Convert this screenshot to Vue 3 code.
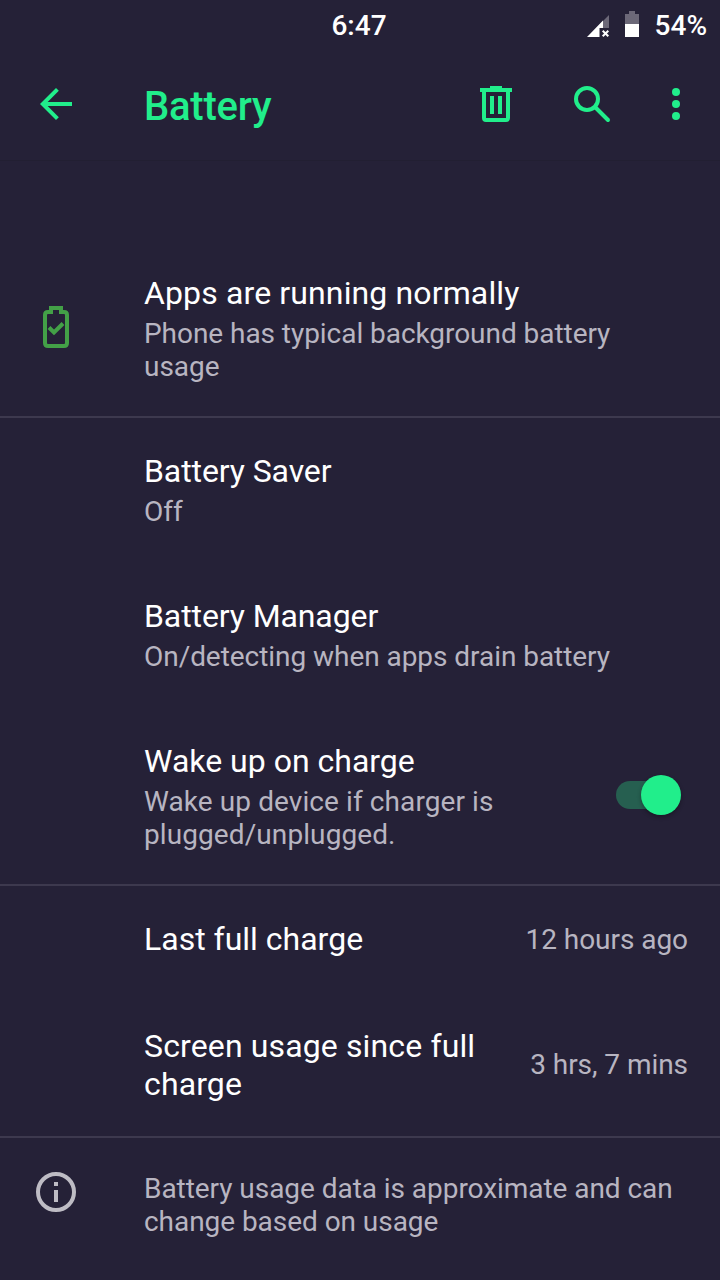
<script setup>
import { ref } from 'vue'

const wakeUp = ref(true)
</script>

<template>
  <div class="screen">
    <div class="status-bar">
      <span class="clock">6:47</span>
      <div class="status-icons">
        <svg class="signal" width="24" height="24" viewBox="0 0 24 24">
          <path d="M22 0V13H13V9Z" fill="#6c6878" />
          <path d="M0 22L16 5.500V13H12.500V22Z" fill="#fff" />
          <path d="M15.700 15.700L21.300 21.300M21.300 15.700L15.700 21.300" stroke="#fff" stroke-width="2" />
        </svg>
        <svg class="battery" width="14" height="26" viewBox="0 0 14 26">
          <path d="M0 3H4V0H10V3H14V13H0Z" fill="#6c6878" />
          <path d="M0 13H14V26H0Z" fill="#fff" />
        </svg>
        <span>54%</span>
      </div>
    </div>

    <header class="toolbar">
      <svg class="back" width="48" height="48" viewBox="0 0 24 24">
        <path d="M20 11H7.830l5.590-5.590L12 4l-8 8 8 8 1.410-1.410L7.830 13H20v-2z" fill="currentColor" />
      </svg>
      <h1>Battery</h1>
      <svg class="action" width="48" height="48" viewBox="0 0 48 48">
        <path d="M8 8H18V6H30V8H40V12H38V38A4 4 0 0 1 34 42H14A4 4 0 0 1 10 38V12H8ZM14 12V38H34V12ZM18 16H22V34H18ZM26 16H30V34H26Z" fill="currentColor" fill-rule="evenodd" />
      </svg>
      <svg class="action" width="48" height="48" viewBox="0 0 48 48" fill="none" stroke="currentColor" stroke-width="4">
        <circle cx="19" cy="19" r="11" />
        <path d="M28 28L40 40" stroke-linecap="round" />
      </svg>
      <svg class="more" width="48" height="48" viewBox="0 0 48 48" fill="currentColor">
        <circle cx="24" cy="12" r="4" />
        <circle cx="24" cy="24" r="4" />
        <circle cx="24" cy="36" r="4" />
      </svg>
    </header>

    <main class="list">
      <div class="row divided">
        <div class="icon">
          <svg width="48" height="48" viewBox="0 0 48 48" fill="none" stroke="#43a047" stroke-width="4">
            <path d="M19 9H19V5H29V9H32Q35 9 35 12V40Q35 43 32 43H16Q13 43 13 40V12Q13 9 16 9H21" />
            <path d="M17 24.500L22 29.500L31 20.500" />
          </svg>
        </div>
        <div class="text">
          <div class="title loose">Apps are running normally</div>
          <div class="summary">Phone has typical background battery usage</div>
        </div>
      </div>

      <div class="row">
        <div class="icon" />
        <div class="text">
          <div class="title tight">Battery Saver</div>
          <div class="summary">Off</div>
        </div>
      </div>

      <div class="row">
        <div class="icon" />
        <div class="text">
          <div class="title tight">Battery Manager</div>
          <div class="summary">On/detecting when apps drain battery</div>
        </div>
      </div>

      <div class="row divided">
        <div class="icon" />
        <div class="text">
          <div class="title">Wake up on charge</div>
          <div class="summary loose">Wake up device if charger is plugged/unplugged.</div>
        </div>
        <button class="switch" :class="{ on: wakeUp }" aria-label="Wake up on charge" @click="wakeUp = !wakeUp">
          <span class="thumb" />
        </button>
      </div>

      <div class="row">
        <div class="icon" />
        <div class="text">
          <div class="title">Last full charge</div>
        </div>
        <div class="value">12 hours ago</div>
      </div>

      <div class="row divided">
        <div class="icon" />
        <div class="text">
          <div class="title loose">Screen usage since full charge</div>
        </div>
        <div class="value">3 hrs, 7 mins</div>
      </div>

      <div class="row footer">
        <div class="icon">
          <svg width="48" height="48" viewBox="0 0 48 48">
            <circle cx="24" cy="24" r="18" fill="none" stroke="#bebcc4" stroke-width="4" />
            <path d="M22 14H26V18H22ZM22 22H26V34H22Z" fill="#bebcc4" />
          </svg>
        </div>
        <div class="text">
          <div class="summary">Battery usage data is approximate and can change based on usage</div>
        </div>
      </div>
    </main>
  </div>
</template>

<style>
body {
  background: #252137;
}
</style>

<style scoped>
.screen {
  width: 720px;
  height: 1280px;
  overflow: hidden;
  display: flex;
  flex-direction: column;
  background: #252137;
  color: #fff;
  font-family: Roboto, sans-serif;
}

svg {
  display: block;
  flex: none;
}

.status-bar {
  height: 48px;
  flex: none;
  display: grid;
  grid-template-columns: 1fr auto 1fr;
  align-items: center;
  box-sizing: border-box;
  padding: 2px 13px 0 11px;
  font-size: 28px;
  line-height: 33px;
  font-weight: 500;
}

.clock {
  grid-column: 2;
}

.status-icons {
  display: flex;
  align-items: center;
  justify-content: flex-end;
}

.signal {
  margin: 4px 14px 0 0;
}

.battery {
  margin: -2px 16px 0 0;
}

.toolbar {
  height: 112px;
  flex: none;
  box-sizing: border-box;
  display: flex;
  align-items: center;
  padding: 0 20px 0 32px;
  color: #21ee8b;
}

.back {
  margin-right: 64px;
}

h1 {
  flex: 1;
  margin: 5px 0 0;
  font-size: 40px;
  line-height: 48px;
  font-weight: 500;
  letter-spacing: -0.25px;
}

.action {
  margin-right: 48px;
}

.more {
  margin-left: -12px;
}

.list {
  padding-top: 79px;
  border-top: 1px solid #221f32;
}

.row {
  display: flex;
  align-items: center;
  box-sizing: border-box;
  padding: 0 32px;
}

.divided {
  border-bottom: 2px solid #3d394e;
}

.divided .text {
  margin-bottom: -2px;
}

.icon {
  width: 112px;
  flex: none;
  margin-top: -2px;
}

.text {
  flex: 1;
  padding: 34px 0 35px;
}

.title {
  font-size: 32px;
  line-height: 38px;
}

.title.loose {
  letter-spacing: 0.13px;
}

.title.tight {
  letter-spacing: -0.1px;
}

.summary {
  font-size: 28px;
  line-height: 33px;
  letter-spacing: -0.05px;
  color: #b8b5c1;
}

.summary.loose {
  letter-spacing: 0.09px;
}

.title + .summary {
  margin-top: 5px;
}

.value {
  margin: -1px 0 0 32px;
  font-size: 28px;
  line-height: 33px;
  letter-spacing: -0.05px;
  color: #b8b5c1;
}

.switch {
  width: 56px;
  height: 28px;
  flex: none;
  display: flex;
  align-items: center;
  margin: -2px 16px 0 48px;
  padding: 0;
  border: 0;
  border-radius: 14px;
  background: #5b586a;
}

.switch.on {
  background: #265f50;
}

.thumb {
  width: 40px;
  height: 40px;
  flex: none;
  margin-left: -9px;
  border-radius: 50%;
  background: #bdbdbd;
  box-shadow: 0 2px 4px rgba(0, 0, 0, 0.3);
}

.switch.on .thumb {
  margin-left: 25px;
  background: #21ee8b;
}

.footer {
  align-items: flex-start;
}

.footer .icon {
  margin-top: 0;
  padding-top: 30px;
}
</style>
